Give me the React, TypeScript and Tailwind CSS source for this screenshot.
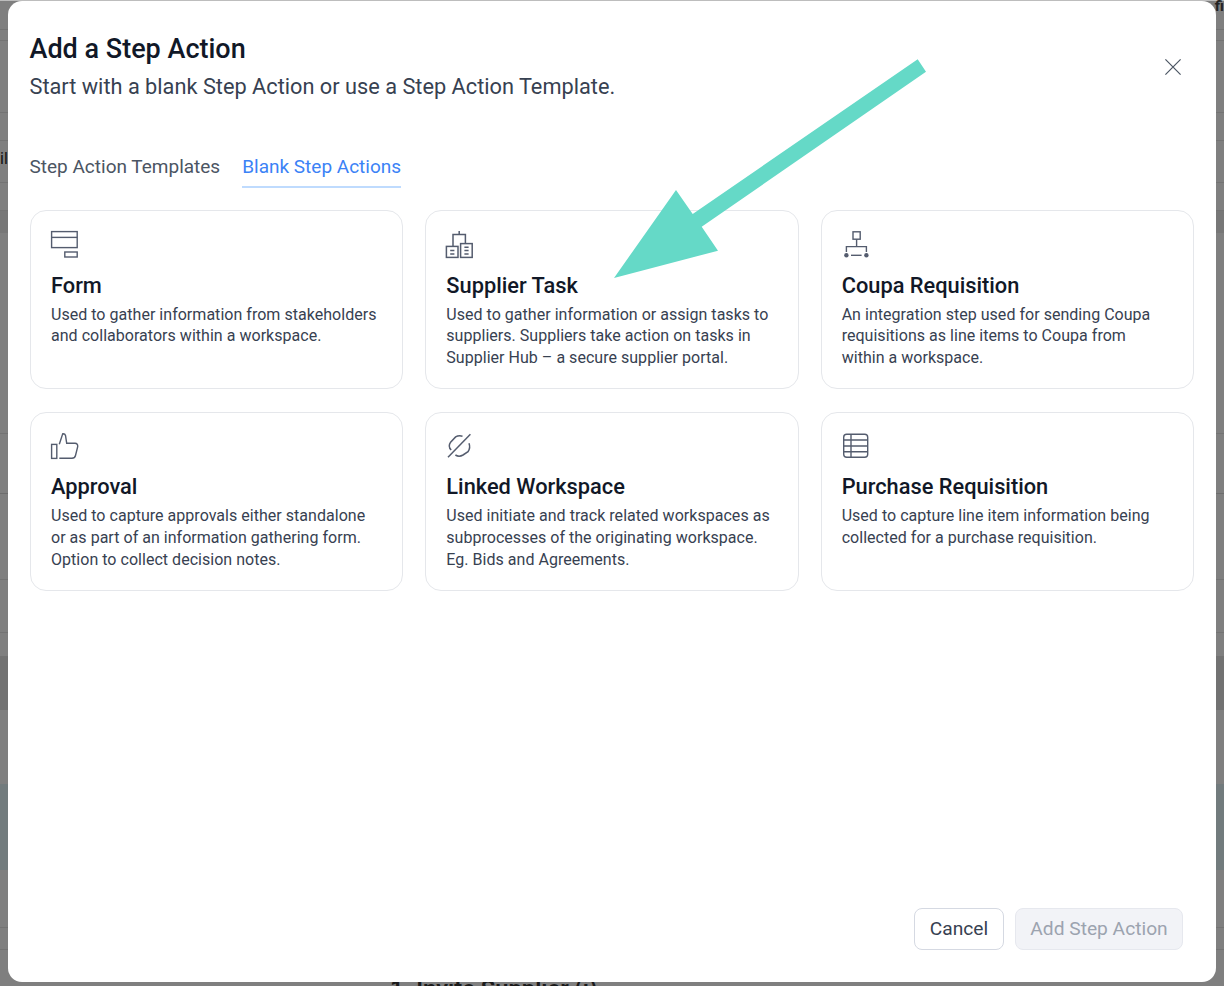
import React from "react";

const iconClass = "h-7 w-7 overflow-visible";

const FormIcon = () => (
  <svg className={iconClass} viewBox="0 0 28 28" fill="none" stroke="#545c6e" strokeWidth="1.4">
    <rect x="0.6" y="0.6" width="25.6" height="16" />
    <path d="M0.6 6.4H26.2" />
    <rect x="13.8" y="21" width="12.4" height="5" />
  </svg>
);

const SupplierIcon = () => (
  <svg className={iconClass} viewBox="0 0 28 28" fill="none" stroke="#545c6e" strokeWidth="1.5">
    <rect x="0.4" y="15.4" width="11.6" height="11" />
    <rect x="14.6" y="12.6" width="11.6" height="13.8" />
    <path d="M7 15V3.6H19.4V12.4M13.2 0V3.6" />
    <path d="M4.2 19.6H8.4M4.2 23H8.4M18.4 16.2H22.6M18.4 19.6H22.6M18.4 23H22.6" />
  </svg>
);

const RequisitionIcon = () => (
  <svg className={iconClass} viewBox="0 0 28 28" fill="none" stroke="#545c6e" strokeWidth="1.4">
    <rect x="11" y="0.8" width="7.2" height="7.4" />
    <path d="M14.6 8.2V15.6M4.4 21V15.6H24.4V21" />
    <path d="M9 24.3H19.6" />
    <circle cx="4.4" cy="24.3" r="2.2" fill="#545c6e" stroke="none" />
    <circle cx="24.4" cy="24.3" r="2.2" fill="#545c6e" stroke="none" />
  </svg>
);

const ThumbIcon = () => (
  <svg className={iconClass} viewBox="0 0 28 28" fill="none" stroke="#545c6e" strokeWidth="1.4">
    <rect x="0.6" y="11.4" width="5.2" height="14" />
    <path d="M8.3 11.3L11.7 0.8Q14 0.6 14.5 2.5L15.7 10.3H24Q27 10.5 26.7 13.7L24.5 22.5Q23.8 25.3 21 25.3H8.3" />
  </svg>
);

const LinkIcon = () => (
  <svg className={iconClass} viewBox="0 0 28 28" fill="none" stroke="#545c6e" strokeWidth="1.5">
    <path d="M2 24.3L24.4 1.3" />
    <path d="M16.5 3.2C14 2.6 11.6 2.8 9.6 3.9L4.6 9.2C3 11.6 2.8 14.8 5.2 17" />
    <path d="M23 10.3C24 13 23.6 16.4 22 18.7L17 22C14.6 23.4 11.6 23.4 9.4 22" />
  </svg>
);

const TableIcon = () => (
  <svg className={iconClass} viewBox="0 0 28 28" fill="none" stroke="#545c6e" strokeWidth="1.4">
    <rect x="1.7" y="1.3" width="24" height="23" rx="3" />
    <path d="M9 1.3V24.3M1.7 7H25.7M1.7 13H25.7M1.7 18.7H25.7" />
  </svg>
);

const CloseIcon = () => (
  <svg className="mr-[13px] h-4 w-4" viewBox="0 0 16 16" fill="none" stroke="#4b5563" strokeWidth="1.2">
    <path d="M0.4 0.4L15.6 15.6M15.6 0.4L0.4 15.6" />
  </svg>
);

const actions = [
  {
    title: "Form",
    icon: <FormIcon />,
    text: "Used to gather information from stakeholders and collaborators within a workspace.",
  },
  {
    title: "Supplier Task",
    icon: <SupplierIcon />,
    text: "Used to gather information or assign tasks to suppliers. Suppliers take action on tasks in Supplier Hub – a secure supplier portal.",
  },
  {
    title: "Coupa Requisition",
    icon: <RequisitionIcon />,
    text: "An integration step used for sending Coupa requisitions as line items to Coupa from within a workspace.",
  },
  {
    title: "Approval",
    icon: <ThumbIcon />,
    text: "Used to capture approvals either standalone or as part of an information gathering form. Option to collect decision notes.",
  },
  {
    title: "Linked Workspace",
    icon: <LinkIcon />,
    text: "Used initiate and track related workspaces as subprocesses of the originating workspace. Eg. Bids and Agreements.",
  },
  {
    title: "Purchase Requisition",
    icon: <TableIcon />,
    text: "Used to capture line item information being collected for a purchase requisition.",
  },
];

// dimmed page behind the dialog, only its edges show
const Backdrop = () => (
  <div className="flex h-[986px] flex-col bg-[#7f7f7f]">
    <div className="h-px shrink-0 bg-[#bdbdbd]" />
    <div className="flex h-[29px] shrink-0 justify-end border-b border-[#737373]">
      <span className="text-[15px] leading-[11px] font-bold text-[#222]">fi</span>
    </div>
    <div className="h-[11px] shrink-0 border-b border-[#737373]" />
    <div className="h-[72px] shrink-0 border-b border-[#737373]" />
    <div className="h-[28px] shrink-0 border-b border-[#737373]" />
    <div className="h-[42px] shrink-0 border-b border-[#737373]">
      <div className="w-2 overflow-hidden pt-[8px] text-[16px] leading-5 text-[#111]">il</div>
    </div>
    <div className="h-[28px] shrink-0 border-b border-[#737373]" />
    <div className="h-[22px] shrink-0 bg-[#777777]" />
    <div className="h-[201px] shrink-0 border-b border-[#737373]" />
    <div className="h-[60px] shrink-0 border-b border-[#6d6d6d]" />
    <div className="h-[86px] shrink-0 border-b border-[#737373]" />
    <div className="h-[53px] shrink-0 border-b border-[#737373]" />
    <div className="h-[23px] shrink-0" />
    <div className="h-[54px] shrink-0 bg-[#727272]" />
    <div className="h-[74px] shrink-0" />
    <div className="h-[86px] shrink-0 bg-[#727b7d]" />
    <div className="h-[58px] shrink-0 border-b border-[#737373]" />
    <div className="h-[22px] shrink-0 border-b border-[#737373]" />
    <div className="pt-[27px] pl-[390px] text-[23.7px] leading-6 font-semibold text-[#1a1a1a]">
      1. Invite Supplier (i)
    </div>
  </div>
);

const ActionCard = ({ title, icon, text }: { title: string; icon: React.ReactNode; text: string }) => (
  <div className="h-[179px] rounded-2xl border border-[#e5e7eb] bg-white pt-5 pr-6 pl-5">
    {icon}
    <div className="mt-[12.3px] text-[21.8px] leading-7 font-medium whitespace-nowrap text-[#111827]">{title}</div>
    <p className="mt-[4.2px] text-[16px] leading-[21.6px] tracking-[0.03px] text-[#374151]">{text}</p>
  </div>
);

export default function App() {
  return (
    <div className="relative h-[986px] overflow-hidden font-['Roboto',sans-serif]">
      <Backdrop />
      <div className="absolute top-px left-2 flex h-[981px] w-[1208px] flex-col rounded-[14px] bg-white px-[22px] pt-[32px] pb-[32px]">
        <div className="flex items-center justify-between">
          <div className="-ml-[0.5px]">
            <h2 className="text-[27px] leading-8 font-medium text-[#111827]">Add a Step Action</h2>
            <p className="mt-2 text-[21.75px] leading-7 text-[#374151]">
              Start with a blank Step Action or use a Step Action Template.
            </p>
          </div>
          <CloseIcon />
        </div>

        <div className="mt-[52px] -ml-[0.5px] flex gap-[22px] text-[19px] leading-7">
          <div className="pb-[5px] text-[#4b5563]">Step Action Templates</div>
          <div className="border-b-2 border-[#bfdbfe] pb-[5px] text-[#3b82f6]">Blank Step Actions</div>
        </div>

        <div className="mt-[22.4px] grid grid-cols-3 gap-x-[22px] gap-y-[22.6px]">
          {actions.map((a) => (
            <ActionCard key={a.title} title={a.title} icon={a.icon} text={a.text} />
          ))}
        </div>

        <div className="mt-auto mr-[11px] flex justify-end gap-[11px] text-[19.2px]">
          <button className="h-[42px] w-[90px] rounded-lg border border-[#d5d9e2] bg-white text-[#374151]">
            Cancel
          </button>
          <button className="h-[42px] w-[168px] rounded-lg border border-[#e6e8ee] bg-[#f2f3f7] text-[#9ca3af]">
            Add Step Action
          </button>
        </div>
      </div>

      {/* annotation arrow drawn on top of the screenshot */}
      <svg className="pointer-events-none absolute inset-0 h-[986px] w-[1224px]" viewBox="0 0 1224 986">
        <polygon
          fill="#65d9c7"
          points="614,278 676,190 692.7,214 917.7,59.3 926,71.7 701.7,226.7 718,250.7"
        />
      </svg>
    </div>
  );
}
